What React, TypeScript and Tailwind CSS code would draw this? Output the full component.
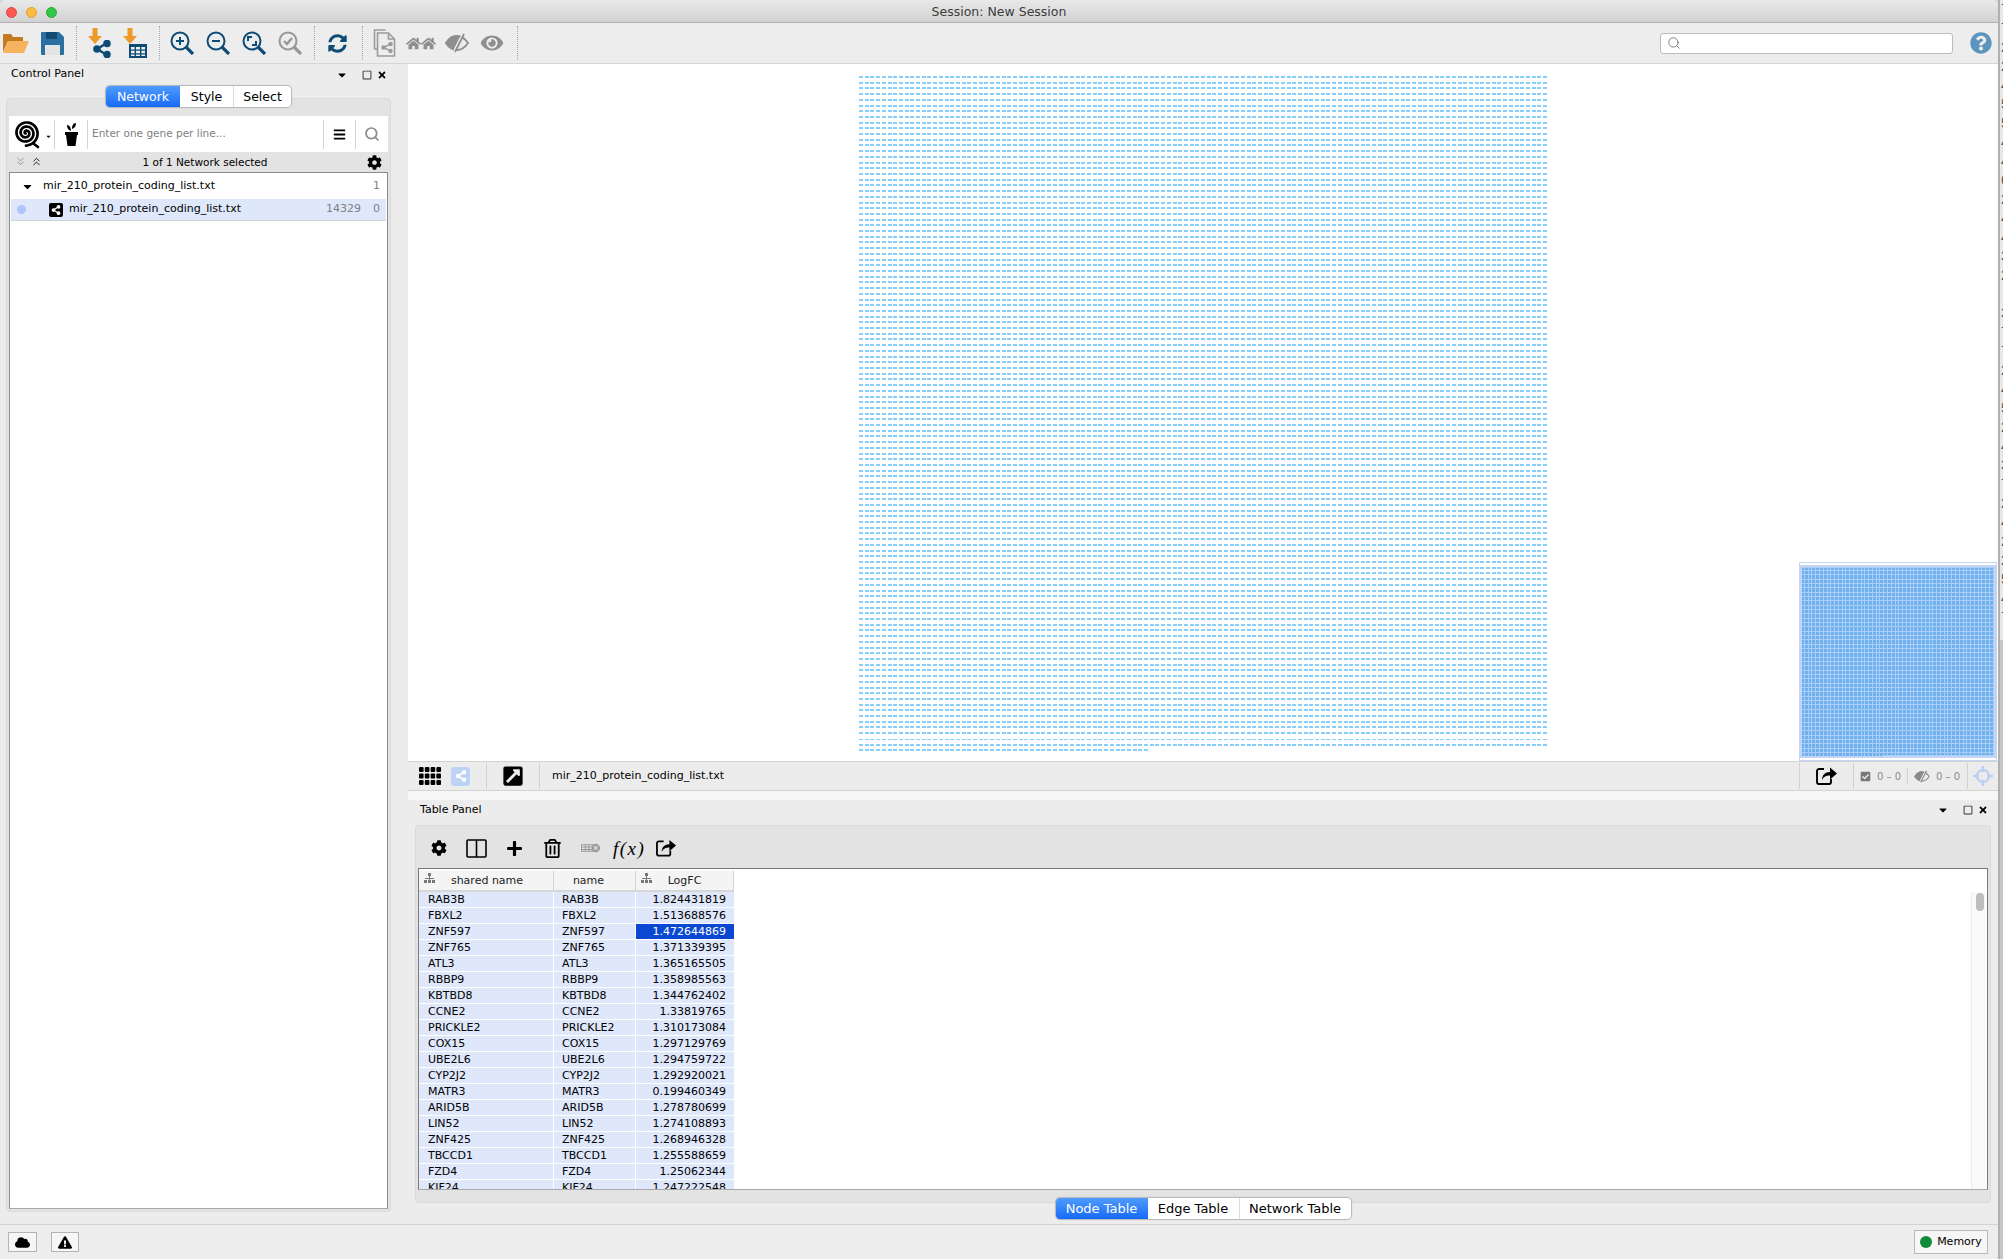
import { useMemo } from 'react'
import { ChevronsDown, ChevronsUp, Search } from 'lucide-react'
import { FaCog, FaPlus, FaRegTrashAlt, FaExternalLinkSquareAlt, FaHome, FaEye, FaCloud, FaExclamationTriangle, FaShareAlt, FaBars, FaSyncAlt, FaCheckSquare, FaRegSquare, FaTimes, FaQuestionCircle, FaCaretDown } from 'react-icons/fa'

const rows = [
  ['RAB3B', '1.824431819'],
  ['FBXL2', '1.513688576'],
  ['ZNF597', '1.472644869'],
  ['ZNF765', '1.371339395'],
  ['ATL3', '1.365165505'],
  ['RBBP9', '1.358985563'],
  ['KBTBD8', '1.344762402'],
  ['CCNE2', '1.33819765'],
  ['PRICKLE2', '1.310173084'],
  ['COX15', '1.297129769'],
  ['UBE2L6', '1.294759722'],
  ['CYP2J2', '1.292920021'],
  ['MATR3', '0.199460349'],
  ['ARID5B', '1.278780699'],
  ['LIN52', '1.274108893'],
  ['ZNF425', '1.268946328'],
  ['TBCCD1', '1.255588659'],
  ['FZD4', '1.25062344'],
  ['KIF24', '1.247222548'],
]

// edge of the window behind this one
const behind = ['7', '7', '2', '2', '4', '5', '5', '4', '4', '6', '2', '4', '4', '3', '2', '', '3', '7', '7', '2', '4', '5', '2', '4', '3', '7', '2', '4', '2', '2', '5', '4', '7']

// grid layout of the 14329 unconnected nodes
function nodePath(count: number, cols: number, stepX: number, stepY: number, w: number) {
  let d = ''
  for (let i = 0; i < count; i++) {
    const x = Math.round((i % cols) * stepX)
    const y = Math.round(Math.floor(i / cols) * stepY)
    d += `M${x} ${y + 1}h${w}`
  }
  return d
}

function spiralPath(cx: number, cy: number, turns: number, maxR: number) {
  let d = ''
  const steps = Math.round(turns * 36)
  for (let i = 0; i <= steps; i++) {
    const t = i / steps
    const a = t * turns * Math.PI * 2 + 2.2
    const r = 0.6 + t * (maxR - 0.6)
    d += `${i === 0 ? 'M' : 'L'}${(cx + r * Math.cos(a)).toFixed(2)} ${(cy + r * Math.sin(a)).toFixed(2)}`
  }
  return d
}

function MagnifierIcon({ color, kind }: { color: string; kind: 'plus' | 'minus' | 'fit' | 'check' }) {
  return (
    <svg width="24" height="24" viewBox="0 0 24 24" fill="none" stroke={color} strokeWidth="2">
      <circle cx="10" cy="10" r="8.5" />
      <path d="M16 16l7 7" strokeWidth="3.2" />
      {kind === 'plus' && <path d="M6 10h8M10 6v8" />}
      {kind === 'minus' && <path d="M6 10h8" />}
      {kind === 'fit' && <path d="M6 10V6h4M14 10v4h-4" />}
      {kind === 'check' && <path d="M6 10l3 3 5-6" strokeWidth="2.4" />}
    </svg>
  )
}

function ArrowDown() {
  return (
    <svg className="absolute top-0 left-0" width="14" height="18" viewBox="0 0 14 18" fill="#ee9a2a">
      <path d="M4.500 0h5v8H14l-7 8-7-8h4.500z" />
    </svg>
  )
}

function ImportNetworkIcon() {
  return (
    <div className="relative w-[23px] h-[30px]">
      <ArrowDown />
      <svg className="absolute bottom-0 right-0" width="18" height="18" viewBox="0 0 18 18" fill="#0f4c75" stroke="#0f4c75" strokeWidth="2.4">
        <path d="M14 3L4 9l10 6" fill="none" />
        <circle cx="14" cy="3.500" r="2.600" />
        <circle cx="4" cy="9" r="2.600" />
        <circle cx="14" cy="14.500" r="2.600" />
      </svg>
    </div>
  )
}

function ImportTableIcon() {
  return (
    <div className="relative w-[24px] h-[30px]">
      <div className="absolute left-0 top-0"><ArrowDown /></div>
      <svg className="absolute bottom-0 right-0" width="18" height="14" viewBox="0 0 18 14" fill="#0f4c75">
        <path fillRule="evenodd" d="M0 0h18v14H0zM2 3v2.500h3.600V3zm5 0v2.500h4V3zm5.400 0v2.500H16V3zM2 6.800v2.400h3.600V6.800zm5 0v2.400h4V6.800zm5.400 0v2.400H16V6.800zM2 10.400V12h3.600v-1.600zm5 0V12h4v-1.600zm5.400 0V12H16v-1.600z" />
      </svg>
    </div>
  )
}

function FolderIcon() {
  return (
    <svg width="26" height="22" viewBox="0 0 26 22">
      <path d="M0 3a1 1 0 0 1 1-1h7l2 3h10v4H5L0 20z" fill="#c67a1e" />
      <path d="M5 9h21l-5 12H0z" fill="#f7b25e" />
    </svg>
  )
}

function SaveIcon() {
  return (
    <svg width="23" height="23" viewBox="0 0 23 23">
      <path d="M1 0h17l5 5v17a1 1 0 0 1-1 1H1a1 1 0 0 1-1-1V1a1 1 0 0 1 1-1z" fill="#2a6f9f" />
      <path d="M5 0h11v7H5z" fill="#134a72" />
      <path d="M4 13h15v10H4z" fill="#e4e4e4" />
    </svg>
  )
}

function EyeSlash({ width, height, color }: { width: number; height: number; color: string }) {
  return (
    <svg width={width} height={height} viewBox="0 0 24 20" fill="none" stroke={color} strokeWidth="1.800">
      <path d="M1 10C5 4 9 3 12 3s7 1 11 7c-4 6-8 7-11 7S5 16 1 10z" />
      <path d="M1 10c4-6 8-7 11-7l2 1-6 12C5 15 3 13 1 10z" fill={color} />
      <path d="M18 1L9 19" strokeWidth="2.200" stroke="#ededed" />
      <path d="M19 1L10 19" />
    </svg>
  )
}

function ShareOutIcon({ width, height }: { width: number; height: number }) {
  return (
    <svg width={width} height={height} viewBox="0 0 22 20" fill="none" stroke="#000" strokeWidth="1.900">
      <path d="M8 3H3a2 2 0 0 0-2 2v11a2 2 0 0 0 2 2h10a2 2 0 0 0 2-2v-3" />
      <path d="M6 14c0-5 3-8 8-8V1.500l7 6-7 6V9.500c-4 0-6 1-8 4.500z" fill="#000" stroke="none" />
    </svg>
  )
}

function ToolbarDivider() {
  return <div className="h-[34px] border-l border-dotted border-[#a6a6a6]" />
}

function Spiral() {
  return (
    <svg width="28" height="30" viewBox="0 0 28 30" fill="none" stroke="#000" strokeWidth="2.700" strokeLinecap="round">
      <path d={spiralPath(14, 14, 2.9, 12.6)} />
      <path d="M22 25l4 3" />
    </svg>
  )
}

function PanelControls() {
  return (
    <div className="flex items-center">
      <FaCaretDown className="w-[12px] h-[12px] mr-[14px]" />
      <FaRegSquare className="w-[10px] h-[10px] text-[#333333] mr-[5px]" />
      <FaTimes className="w-[10px] h-[10px]" />
    </div>
  )
}

function Tabs({ items, widths, size }: { items: string[]; widths: string[]; size: string }) {
  return (
    <div className={`flex h-[21px] rounded-[4px] bg-white shadow-[0_0_1px_1px_#b5b5b5] ${size} leading-[21px] text-center overflow-hidden`}>
      {items.map((t, i) => (
        <div
          key={t}
          className={`${widths[i]} ${i === 0 ? 'bg-gradient-to-b from-[#4f9bfb] to-[#1569f6] text-white' : 'text-black'} ${i > 1 ? 'border-l border-[#dcdcdc]' : ''}`}
        >
          {t}
        </div>
      ))}
    </div>
  )
}

export default function App() {
  const nodes = useMemo(() => nodePath(14329, 121, 5.7, 5.706, 4), [])
  const mini = useMemo(() => nodePath(141 * 144 + 60, 141, 1.36, 1.3, 1), [])

  return (
    <div className="w-[2003px] h-[1259px] overflow-hidden flex bg-[#d8d8d8] font-['DejaVu_Sans',sans-serif] text-[11px] text-black">
      <div className="w-[1998px] h-[1259px] shrink-0 flex flex-col bg-[#ececec] rounded-t-[6px] overflow-hidden">
        {/* title bar */}
        <div className="relative h-[23px] shrink-0 bg-gradient-to-b from-[#e9e9e9] to-[#d2d2d2] border-b border-[#b1b1b1] flex items-center justify-center pt-[2px] text-[12.5px] text-[#3c3c3c]">
          <div className="absolute left-[6px] top-[7px] flex gap-[9px]">
            <div className="w-[11px] h-[11px] rounded-full bg-[#fc5753] border border-[#df4744]" />
            <div className="w-[11px] h-[11px] rounded-full bg-[#fdbc40] border border-[#de9f34]" />
            <div className="w-[11px] h-[11px] rounded-full bg-[#33c748] border border-[#27aa35]" />
          </div>
          Session: New Session
        </div>

        {/* main toolbar */}
        <div className="h-[41px] shrink-0 flex items-center border-b border-[#d6d6d6] bg-[#ededed]">
          <div className="flex items-center w-[76px] pl-[3px] gap-[12px]">
            <FolderIcon />
            <SaveIcon />
          </div>
          <ToolbarDivider />
          <div className="flex items-center gap-[12px] pl-[11px] w-[82px]">
            <ImportNetworkIcon />
            <ImportTableIcon />
          </div>
          <ToolbarDivider />
          <div className="flex items-center gap-[12px] pl-[10px] w-[154px]">
            <MagnifierIcon color="#0f4c75" kind="plus" />
            <MagnifierIcon color="#0f4c75" kind="minus" />
            <MagnifierIcon color="#0f4c75" kind="fit" />
            <MagnifierIcon color="#979797" kind="check" />
          </div>
          <ToolbarDivider />
          <div className="flex items-center pl-[13px] w-[47px]">
            <FaSyncAlt className="text-[#0f4c75] w-[19px] h-[19px]" />
          </div>
          <ToolbarDivider />
          <div className="flex items-center pl-[9px] w-[154px] text-[#8f8f8f]">
            <svg width="25" height="28" viewBox="0 0 24 28" fill="none" stroke="#9b9b9b" strokeWidth="1.600">
              <path d="M13 1H2v19h3M5 4h11l6 6v17H5z" />
              <path d="M16 4v6h6" />
              <path d="M18 15l-7 3.500 7 3.500" strokeWidth="1.400" />
              <circle cx="18" cy="15" r="1.400" fill="#9b9b9b" />
              <circle cx="11" cy="18.500" r="1.400" fill="#9b9b9b" />
              <circle cx="18" cy="22" r="1.400" fill="#9b9b9b" />
            </svg>
            <div className="flex ml-[9px]">
              <FaHome className="w-[15px] h-[15px]" />
              <FaHome className="w-[15px] h-[15px]" />
            </div>
            <div className="ml-[9px] flex"><EyeSlash width={24} height={20} color="#8f8f8f" /></div>
            <FaEye className="w-[24px] h-[20px] ml-[11px]" />
          </div>
          <ToolbarDivider />
          <div className="ml-auto flex items-center gap-[17px] pr-[6px]">
            <div className="w-[293px] h-[21px] bg-white border border-[#bcbcbc] rounded-[3px] flex items-center pl-[6px]">
              <Search className="w-[14px] h-[14px] text-[#666666]" strokeWidth={1.4} />
            </div>
            <FaQuestionCircle className="w-[22px] h-[22px] text-[#5b95bd]" />
          </div>
        </div>

        <div className="flex-1 flex min-h-0">
          {/* control panel */}
          <div className="w-[408px] shrink-0 flex flex-col">
            <div className="h-[21px] shrink-0 flex items-center justify-between pl-[11px] pr-[21px]">
              <span>Control Panel</span>
              <PanelControls />
            </div>
            <div className="relative flex-1 min-h-0 ml-[6px] mt-[13px] mb-[12px] w-[385px] bg-[#e3e3e3] rounded-[4px] border border-[#dadada] pl-[2px] pr-[2px] pt-[17px] pb-[2px] flex flex-col">
              <div className="absolute top-[-13px] left-[99px]">
                <Tabs items={['Network', 'Style', 'Select']} widths={['w-[74px]', 'w-[53px]', 'w-[58px]']} size="text-[12.5px]" />
              </div>
              <div className="h-[36px] shrink-0 bg-white flex items-center">
                <div className="w-[45px] flex items-center pl-[3px] gap-[5px]">
                  <Spiral />
                  <FaCaretDown className="w-[7px] h-[7px] mt-[4px]" />
                </div>
                <div className="h-[29px] border-l border-[#d4d4d4]" />
                <div className="w-[32px] flex justify-center">
                  <svg width="15" height="25" viewBox="0 0 15 25" fill="#000">
                    <path d="M1 10h13v3h-1l-1.500 11h-8L2 13H1z" />
                    <path d="M7 9C7 5 5 3 3 3c0 3 1 5 4 6zM8 7c0-3 1-6 4-6 0 3-1 5-4 6z" />
                  </svg>
                </div>
                <div className="h-[29px] border-l border-[#d4d4d4]" />
                <span className="ml-[4px] flex-1 text-[#808080] text-[10.5px]">Enter one gene per line...</span>
                <div className="h-[29px] border-l border-[#d4d4d4]" />
                <div className="w-[31px] flex justify-center"><FaBars className="w-[13px] h-[13px]" /></div>
                <div className="h-[29px] border-l border-[#d4d4d4]" />
                <div className="w-[32px] flex justify-center"><Search className="w-[16px] h-[16px] text-[#8b8b8b]" strokeWidth={2.6} /></div>
              </div>
              <div className="h-[20px] shrink-0 relative flex items-center justify-center pt-[2px]">
                <div className="absolute left-[5px] top-[3px] flex gap-[3px]">
                  <ChevronsDown className="w-[13px] h-[13px] text-[#8a8a8a]" strokeWidth={1.6} />
                  <ChevronsUp className="w-[13px] h-[13px]" strokeWidth={1.6} />
                </div>
                <span className="ml-[13px] text-[10.5px]">1 of 1 Network selected</span>
                <FaCog className="absolute right-[6px] top-[3px] w-[15px] h-[15px]" />
              </div>
              <div className="flex-1 min-h-0 bg-white border border-[#8c8c8c] border-b-[#a9a9a9]">
                <div className="h-[26px] flex items-center pl-[11px] pr-[7px]">
                  <FaCaretDown className="w-[13px] h-[13px]" />
                  <span className="ml-[9px] flex-1">mir_210_protein_coding_list.txt</span>
                  <span className="text-[#7f7f7f]">1</span>
                </div>
                <div className="h-[22px] mx-[1px] flex items-center bg-[#dfe8fb] border-b border-[#cfd3da] pl-[6px] pr-[6px]">
                  <div className="w-[9px] h-[9px] rounded-full bg-[#aec6f6]" />
                  <div className="ml-[23px] w-[14px] h-[14px] bg-black rounded-[2px] flex items-center justify-center">
                    <FaShareAlt className="w-[10px] h-[10px] text-white" />
                  </div>
                  <span className="ml-[6px] flex-1">mir_210_protein_coding_list.txt</span>
                  <span className="text-[#7f7f7f] mr-[12px]">14329</span>
                  <span className="text-[#7f7f7f]">0</span>
                </div>
              </div>
            </div>
          </div>

          {/* network view and table panel */}
          <div className="flex-1 min-w-0 flex flex-col">
            <div className="relative h-[697px] shrink-0 bg-white">
              <svg className="absolute left-[451px] top-[12px]" width="700" height="680" shapeRendering="crispEdges">
                <path d={nodes} stroke="#87cefa" strokeWidth="2" fill="none" />
                <rect x="0" y="662" width="700" height="1" fill="#ffffff" />
              </svg>
              {/* birds eye view */}
              <div className="absolute left-[1391px] top-[498px] w-[198px] h-[199px] bg-[#c3d5f5] p-[1px] flex flex-col">
                <div className="h-[2px] shrink-0 bg-white" />
                <div className="flex-1 min-h-0 px-[2px] pt-[2px]">
                  <svg width="192" height="190" shapeRendering="crispEdges">
                    <rect width="192" height="189" fill="#aacdf5" />
                    <path d={mini} stroke="#6fb1ef" strokeWidth="1" fill="none" />
                  </svg>
                </div>
                <div className="h-[2px] shrink-0 bg-white" />
              </div>
            </div>
            <div className="h-[30px] shrink-0 flex items-center border-y border-[#d2d2d2] bg-[#ececec]">
              <div className="w-[78px] flex items-center pl-[11px]">
                <svg width="22" height="18" viewBox="0 0 22 18" fill="#000">
                  {[0, 6.5, 13].map((y) =>
                    [0, 5.8, 11.600, 17.400].map((x) => <rect key={`${x}-${y}`} x={x} y={y} width="4.600" height="5" rx="1" />)
                  )}
                </svg>
                <div className="ml-[10px] w-[19px] h-[19px] bg-[#bcd2f6] rounded-[3px] flex items-center justify-center">
                  <FaShareAlt className="w-[12px] h-[12px] text-white" />
                </div>
              </div>
              <div className="h-[26px] border-l border-[#d2d2d2]" />
              <div className="w-[52px] flex justify-center">
                <FaExternalLinkSquareAlt className="w-[22px] h-[22px]" />
              </div>
              <div className="h-[26px] border-l border-[#d2d2d2]" />
              <span className="ml-[12px] flex-1">mir_210_protein_coding_list.txt</span>
              <div className="h-[26px] border-l border-[#d2d2d2]" />
              <div className="w-[53px] flex justify-center"><ShareOutIcon width={22} height={20} /></div>
              <div className="h-[26px] border-l border-[#d2d2d2]" />
              <div className="flex items-center w-[53px] pl-[6px] gap-[6px] text-[10px] text-[#8a8a8a]">
                <FaCheckSquare className="w-[11px] h-[11px] text-[#777777]" />
                <span>0 – 0</span>
              </div>
              <div className="h-[16px] border-l border-[#d2d2d2]" />
              <div className="flex items-center w-[59px] pl-[6px] gap-[6px] text-[10px] text-[#8a8a8a]">
                <EyeSlash width={16} height={13} color="#8a8a8a" />
                <span>0 – 0</span>
              </div>
              <div className="h-[26px] border-l border-[#d2d2d2]" />
              <svg className="ml-[5px] mr-[5px]" width="20" height="20" viewBox="0 0 20 20" fill="none" stroke="#bcd0f6" strokeWidth="2.400">
                <circle cx="10" cy="10" r="6" />
                <path d="M10 0v6M10 14v6M0 10h6M14 10h6" />
              </svg>
            </div>

            {/* table panel */}
            <div className="h-[9px] shrink-0 bg-[#f7f7f7]" />
            <div className="flex-1 min-h-0 flex flex-col">
              <div className="h-[25px] shrink-0 flex items-center justify-between pl-[12px] pr-[10px] pb-[5px]">
                <span>Table Panel</span>
                <PanelControls />
              </div>
              <div className="relative h-[378px] shrink-0 ml-[7px] mr-[7px] bg-[#e3e3e3] rounded-[4px] border border-[#dadada] flex flex-col px-[2px] pb-[12px]">
                <div className="h-[42px] shrink-0 flex items-center pl-[13px] pt-[2px]">
                  <FaCog className="w-[16px] h-[16px]" />
                  <svg className="ml-[19px]" width="21" height="19" viewBox="0 0 21 19" fill="none" stroke="#000" strokeWidth="1.600">
                    <rect x="1" y="1" width="19" height="17" rx="1" />
                    <path d="M10.500 1v17" />
                  </svg>
                  <FaPlus className="ml-[19px] w-[17px] h-[17px]" />
                  <FaRegTrashAlt className="ml-[21px] w-[17px] h-[19px]" />
                  <svg className="ml-[20px]" width="19" height="10" viewBox="0 0 20 10" fill="#9a9a9a">
                    <path fillRule="evenodd" d="M0 1h13v8H0zM1 2v1.500h3V2zm4 0v1.500h3V2zm4 0v1.500h3V2zM1 4.500V6h3V4.500zm4 0V6h3V4.500zm4 0V6h3V4.500zM1 7v1h3V7zm4 0v1h3V7zm4 0v1h3V7z" />
                    <circle cx="15.500" cy="5" r="4.500" />
                    <path d="M13.500 3l4 4m0-4l-4 4" stroke="#e3e3e3" strokeWidth="1.200" />
                  </svg>
                  <span className="ml-[13px] w-[30px] font-['Liberation_Serif',serif] italic text-[19px] tracking-[1.500px] leading-none">f(x)</span>
                  <div className="ml-[13px] flex"><ShareOutIcon width={21} height={20} /></div>
                </div>
                <div className="relative flex-1 min-h-0 bg-white border border-[#7a7a7a] border-b-[#a9a9a9] pt-[2px] overflow-hidden">
                  <div className="w-[315px] h-[21px] flex bg-[#f4f4f4] border-b-2 border-[#d6d6d6] text-center leading-[20px] text-[#222222]">
                    <div className="relative w-[135px] border-r border-[#d4d4d4] pl-[2px]">
                      <svg className="absolute left-[5px] top-[2px]" width="11" height="11" viewBox="0 0 11 11" fill="#777777">
                        <path d="M4 0h3v3H4zM0 7h3v3H0zM4 7h3v3H4zM8 7h3v3H8zM1 5h9v1H1zM5 3h1v4H5z" />
                      </svg>
                      shared name
                    </div>
                    <div className="w-[82px] border-r border-[#d4d4d4] pr-[12px]">name</div>
                    <div className="relative w-[98px] border-r border-[#d4d4d4]">
                      <svg className="absolute left-[5px] top-[2px]" width="11" height="11" viewBox="0 0 11 11" fill="#777777">
                        <path d="M4 0h3v3H4zM0 7h3v3H0zM4 7h3v3H4zM8 7h3v3H8zM1 5h9v1H1zM5 3h1v4H5z" />
                      </svg>
                      LogFC
                    </div>
                  </div>
                  <div className="w-[315px]">
                    {rows.map(([gene, fc]) => (
                      <div key={gene} className="h-[16px] flex border-b border-white leading-[15px]">
                        <div className="w-[135px] bg-[#dfe7fb] border-r border-white pl-[9px]">{gene}</div>
                        <div className="w-[82px] bg-[#dfe7fb] border-r border-white pl-[8px]">{gene}</div>
                        <div className={`w-[98px] text-right pr-[8px] ${gene === 'ZNF597' ? 'bg-[#0b48d1] text-white' : 'bg-[#dfe7fb]'}`}>{fc}</div>
                      </div>
                    ))}
                  </div>
                  <div className="absolute right-0 top-[23px] bottom-0 w-[16px] bg-[#fafafa] border-l border-[#ececec]">
                    <div className="ml-[4px] mt-[1px] w-[8px] h-[18px] rounded-full bg-[#bdbdbd]" />
                  </div>
                </div>
              </div>
              <div className="flex justify-center -mt-[5px] relative">
                <Tabs items={['Node Table', 'Edge Table', 'Network Table']} widths={['w-[92px]', 'w-[91px]', 'w-[112px]']} size="text-[13px]" />
              </div>
            </div>
          </div>
        </div>

        {/* status bar */}
        <div className="h-[35px] shrink-0 border-t border-[#d2d2d2] flex items-center justify-between pl-[8px] pr-[10px] bg-[#ededed]">
          <div className="flex gap-[14px]">
            <div className="w-[29px] h-[20px] bg-[#f6f6f6] border border-[#b4b4b4] flex items-center justify-center">
              <FaCloud className="w-[15px] h-[13px]" />
            </div>
            <div className="w-[28px] h-[20px] bg-[#f6f6f6] border border-[#b4b4b4] flex items-center justify-center">
              <FaExclamationTriangle className="w-[14px] h-[13px]" />
            </div>
          </div>
          <div className="w-[74px] h-[24px] bg-[#f6f6f6] border border-[#b9b9b9] flex items-center justify-center gap-[5px]">
            <div className="w-[12px] h-[12px] rounded-full bg-[#0e8a3a]" />
            <span>Memory</span>
          </div>
        </div>
      </div>

      {/* sliver of the window behind */}
      <div className="w-[5px] shrink-0 border-l-2 border-[#b0b0b0] bg-[#e8e8e8] overflow-hidden font-['Liberation_Sans',sans-serif] text-[14px] text-[#555555]">
        <div className="h-[640px]">
          {behind.map((d, i) => (
            <div key={i} className="h-[19px] leading-[19px] pl-[1px]">{d}</div>
          ))}
        </div>
        <div className="h-[619px] bg-[#c6c6c6]" />
      </div>
    </div>
  )
}
